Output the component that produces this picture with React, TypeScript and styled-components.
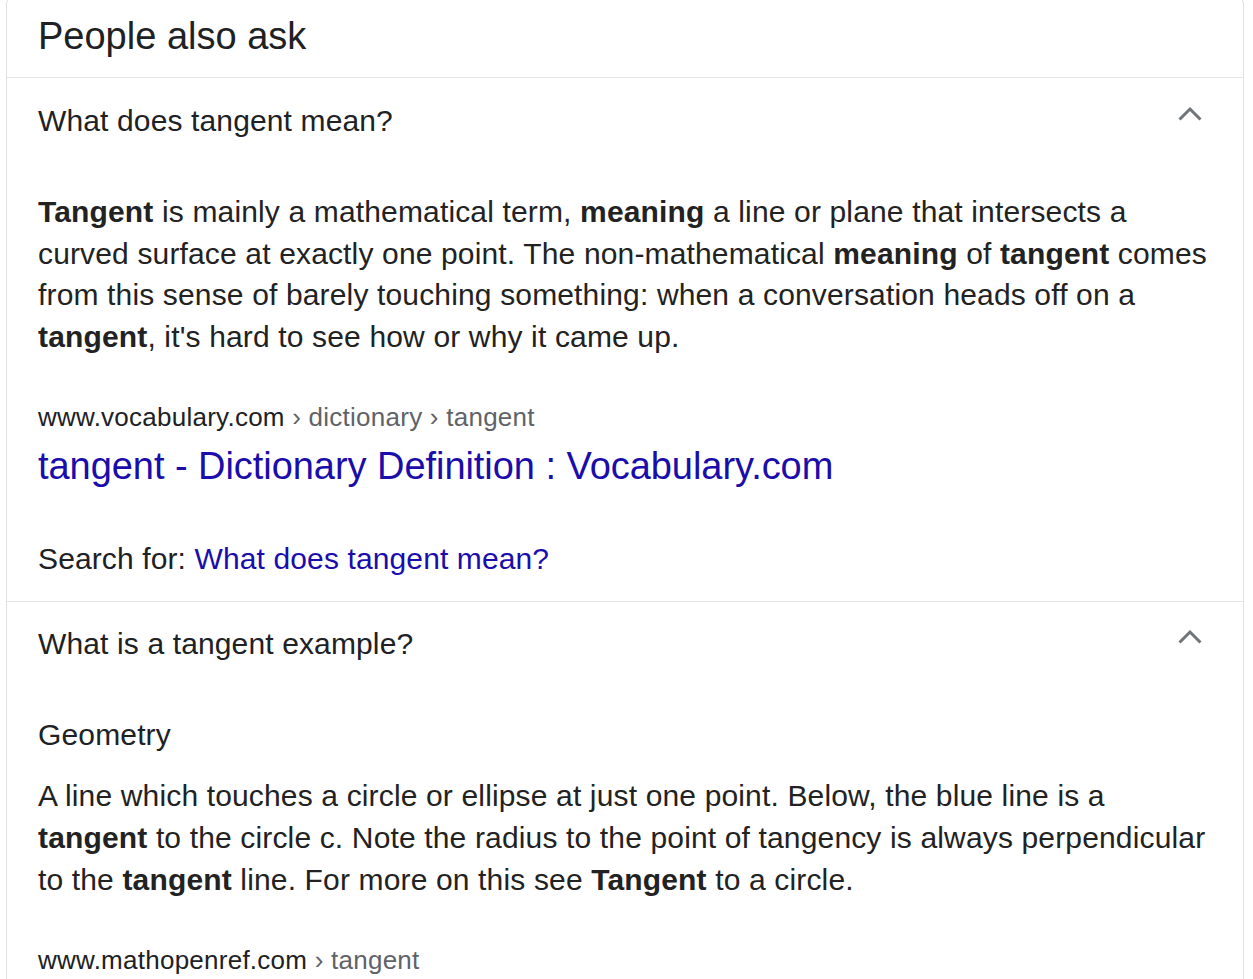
import React from "react";
import styled, { createGlobalStyle } from "styled-components";

const GlobalStyle = createGlobalStyle`
  body {
    margin: 0;
    background: #fff;
    font-family: "Liberation Sans", Arial, sans-serif;
    color: #222;
  }
`;

const Card = styled.div`
  box-sizing: border-box;
  width: 1238px;
  margin: -4px 0 0 6px;
  border: 1px solid #dfe1e5;
  border-radius: 8px;
  overflow: hidden;
`;

const Header = styled.h2`
  margin: 0;
  padding: 17px 31px 19px;
  font-size: 38px;
  line-height: 44px;
  font-weight: 400;
  color: #202124;
  border-bottom: 1px solid #e3e4e6;
`;

const Section = styled.div<{ $last?: boolean }>`
  padding: ${(p) => (p.$last ? "24px" : "25px")} 29px 24px 31px;
  border-bottom: ${(p) => (p.$last ? "none" : "1px solid #e3e4e6")};
`;

const QuestionRow = styled.div`
  display: flex;
  justify-content: space-between;
  align-items: flex-start;
`;

const Question = styled.div`
  font-size: 30px;
  line-height: 36px;
  letter-spacing: 0.13px;
  color: #202124;
`;

const Chevron = styled.svg`
  width: 24px;
  height: 16px;
  margin: 3px 12px 0 0;
  flex: none;
`;

const Answer = styled.div`
  margin-top: 52px;
`;

const SubHeading = styled.div`
  font-size: 30px;
  line-height: 41.6px;
  letter-spacing: 0.15px;
  color: #202124;
  margin-bottom: 19.4px;
`;

const Paragraph = styled.p`
  margin: 0;
  font-size: 30px;
  line-height: 41.6px;
  letter-spacing: 0.15px;
  color: #222;

  b {
    font-weight: 700;
  }
`;

const Breadcrumb = styled.div`
  margin-top: 43px;
  font-size: 26px;
  line-height: 34px;
  letter-spacing: 0.25px;
  color: #202124;
`;

const Crumb = styled.span`
  color: #5f6368;
`;

const TitleLink = styled.a`
  display: block;
  margin-top: 8px;
  font-size: 38px;
  line-height: 48px;
  letter-spacing: -0.05px;
  color: #1a0dab;
  text-decoration: none;
`;

const SearchFor = styled.div`
  margin-top: 51px;
  font-size: 30px;
  line-height: 36px;
  letter-spacing: 0.12px;
  color: #202124;
`;

const SearchLink = styled.a`
  color: #1a0dab;
  text-decoration: none;
`;

const UpChevron = () => (
  <Chevron viewBox="0 0 24 16">
    <polyline
      points="1.5,13.5 12,3 22.5,13.5"
      fill="none"
      stroke="#70757a"
      strokeWidth="3"
    />
  </Chevron>
);

const App = () => {
  return (
    <>
      <GlobalStyle />
      <Card>
        <Header>People also ask</Header>
        <Section>
          <QuestionRow>
            <Question>What does tangent mean?</Question>
            <UpChevron />
          </QuestionRow>
          <Answer>
            <Paragraph>
              <b>Tangent</b> is mainly a mathematical term, <b>meaning</b> a line or plane that
              intersects a curved surface at exactly one point. The non-mathematical{" "}
              <b>meaning</b> of <b>tangent</b> comes from this sense of barely touching
              something: when a conversation heads off on a <b>tangent</b>, it's hard to see
              how or why it came up.
            </Paragraph>
            <Breadcrumb>
              www.vocabulary.com<Crumb> › dictionary › tangent</Crumb>
            </Breadcrumb>
            <TitleLink href="#">tangent - Dictionary Definition : Vocabulary.com</TitleLink>
            <SearchFor>
              Search for: <SearchLink href="#">What does tangent mean?</SearchLink>
            </SearchFor>
          </Answer>
        </Section>
        <Section $last>
          <QuestionRow>
            <Question>What is a tangent example?</Question>
            <UpChevron />
          </QuestionRow>
          <Answer>
            <SubHeading>Geometry</SubHeading>
            <Paragraph>
              A line which touches a circle or ellipse at just one point. Below, the blue line
              is a <b>tangent</b> to the circle c. Note the radius to the point of tangency is
              always perpendicular to the <b>tangent</b> line. For more on this see{" "}
              <b>Tangent</b> to a circle.
            </Paragraph>
            <Breadcrumb>
              www.mathopenref.com<Crumb> › tangent</Crumb>
            </Breadcrumb>
          </Answer>
        </Section>
      </Card>
    </>
  );
};

export default App;
